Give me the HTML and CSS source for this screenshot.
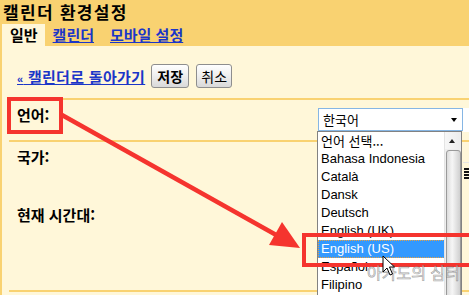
FILE: index.html
```
<!DOCTYPE html>
<html lang="ko">
<head>
<meta charset="utf-8">
<link rel="stylesheet" href="styles.css">
</head>
<body>
<div class="page">
  <div class="header">
    <div class="title">캘린더 환경설정</div>
    <div class="tabs">
      <span class="tab active">일반</span>
      <a class="tab link">캘린더</a>
      <a class="tab link">모바일 설정</a>
    </div>
  </div>
  <div class="content">
    <div class="toolbar">
      <a class="back"><span class="laquo">«</span> 캘린더로 돌아가기</a>
      <button class="btn primary">저장</button>
      <button class="btn secondary">취소</button>
    </div>
    <div class="row lang">
      <div class="label">언어:</div>
      <div class="select">
        <span class="value">한국어</span>
        <span class="caret"></span>
        <div class="listbox">
          <div class="opt ko">언어 선택...</div>
          <div class="opt">Bahasa Indonesia</div>
          <div class="opt">Català</div>
          <div class="opt">Dansk</div>
          <div class="opt">Deutsch</div>
          <div class="opt">English (UK)</div>
          <div class="opt selected">English (US)</div>
          <div class="opt">Español</div>
          <div class="opt">Filipino</div>
          <div class="scrollbar">
            <div class="sb-up"><span class="sb-arrow"></span></div>
            <div class="sb-thumb"></div>
          </div>
        </div>
      </div>
      <div class="edge-white"></div>
    </div>
    <div class="row rest">
      <div class="label">국가:</div>
      <div></div>
      <div class="edge-box"><span class="lines"></span><span class="lines"></span><span class="lines"></span><span class="lines"></span></div>
      <div class="label tz">현재 시간대:</div>
    </div>
  </div>

  <div class="mark mark1"></div>
  <div class="mark mark2"></div>
  <svg class="arrow" width="469" height="295" viewBox="0 0 469 295">
    <line x1="62" y1="115" x2="278" y2="236" stroke="#F5342E" stroke-width="4.5"/>
    <polygon points="300,248 269,245 282,222" fill="#F5342E"/>
  </svg>
  <div class="watermark">아카도의 심터</div>
  <svg class="cursor" width="14" height="22" viewBox="0 0 14 22">
    <path d="M1 1 L1 17 L5 13 L8 20 L10.5 19 L7.5 12 L12.5 12 Z" fill="#fff" stroke="#000" stroke-width="1"/>
  </svg>
</div>
</body>
</html>
```
FILE: styles.css
```
html, body {
  margin: 0;
  padding: 0;
}
body {
  background: #FFF7D9;
  font-family: "Noto Sans CJK KR", "Noto Sans", sans-serif;
  color: #000;
  overflow: hidden;
}
.page {
  position: relative;
  width: 469px;
  height: 295px;
  overflow: hidden;
}
.header {
  background: #F9D271;
}
.title {
  line-height: 24px;
  font-size: 17px;
  font-weight: bold;
  padding-left: 3px;
  letter-spacing: 1.3px;
  white-space: nowrap;
}
.tabs {
  display: flex;
  height: 22px;
  line-height: 22px;
  font-size: 15px;
  font-weight: bold;
}
.tab {
  padding: 0 8px;
  white-space: nowrap;
}
.tab.active {
  margin-left: 2px;
  background: #FFF7D9;
  padding: 0 7px 0 8px;
}
.tab.link {
  color: #1B36C8;
  text-decoration: underline;
}
.content {
  border-left: 2px solid #F9D271;
  padding-left: 7px;
  height: 249px;
}
.toolbar {
  display: flex;
  align-items: flex-end;
  padding: 18px 0 0 8px;
  height: 24px;
  margin-bottom: 10px;
}
.back {
  color: #1B36C8;
  text-decoration: underline;
  font-size: 15px;
  font-weight: bold;
  line-height: 18px;
  letter-spacing: 0.3px;
  margin-right: 6px;
  white-space: nowrap;
}
.laquo {
  font-family: "Liberation Sans", sans-serif;
  font-size: 11px;
}
.btn {
  height: 24px;
  padding: 0;
  border: 1px solid #8e8e8e;
  border-radius: 3px;
  background: linear-gradient(#ffffff, #f0f0f0 45%, #d9d9d9);
  font-family: "Noto Sans CJK KR", sans-serif;
  font-size: 14px;
  line-height: 20px;
  color: #000;
}
.btn.primary {
  width: 38px;
  font-weight: bold;
  margin-right: 7px;
}
.btn.secondary {
  width: 36px;
  font-weight: normal;
}
.row {
  border-top: 2px solid #F9D271;
  display: grid;
  grid-template-columns: 301px 145px 40px;
  padding-left: 8px;
}
.row.lang {
  height: 40px;
}
.row.rest {
  height: 148px;
  border-bottom: 2px solid #F9D271;
  grid-template-rows: 58px auto;
}
.label {
  font-size: 15px;
  font-weight: bold;
  line-height: 18px;
  padding-top: 6px;
  white-space: nowrap;
}
.select {
  position: relative;
  z-index: 5;
  margin-top: 8px;
  height: 23px;
  box-sizing: border-box;
  border: 1px solid #86B6E4;
  background: #fff;
  font-size: 13px;
  line-height: 21px;
  padding-left: 4px;
}
.caret {
  position: absolute;
  right: 5px;
  top: 9px;
  width: 0;
  height: 0;
  border-left: 3.5px solid transparent;
  border-right: 3.5px solid transparent;
  border-top: 4px solid #000;
}
.listbox {
  position: absolute;
  left: -2px;
  top: 22px;
  width: 145px;
  height: 175px;
  box-sizing: border-box;
  border: 1px solid #828282;
  background: #fff;
  font-family: "Liberation Sans", "Noto Sans CJK KR", sans-serif;
  font-size: 13px;
}
.opt {
  height: 18px;
  line-height: 18px;
  padding-left: 3px;
  width: 124px;
  white-space: nowrap;
}
.opt.ko {
  font-family: "Noto Sans CJK KR", sans-serif;
}
.opt.selected {
  background: #3399FF;
  color: #fff;
  outline: 1px dotted #E8A040;
  outline-offset: -1px;
}
.scrollbar {
  position: absolute;
  right: 0;
  top: 0;
  bottom: 0;
  width: 16px;
  background: #eeeeee;
  border-left: 1px solid #e4e4e4;
}
.sb-up {
  height: 17px;
  position: relative;
  background: linear-gradient(90deg, #f7f7f7, #ececec);
}
.sb-arrow {
  position: absolute;
  left: 4px;
  top: 7px;
  width: 0;
  height: 0;
  border-left: 3.5px solid transparent;
  border-right: 3.5px solid transparent;
  border-bottom: 4px solid #222;
}
.sb-thumb {
  margin: 1px 0 0 1px;
  width: 13px;
  height: 160px;
  border: 1px solid #9a9a9a;
  border-radius: 3px;
  background: linear-gradient(90deg, #dcdcdc, #f6f6f6 40%, #d0d0d0);
}
.edge-white {
  margin-top: 8px;
  height: 24px;
  background: #fff;
}
.edge-box {
  margin-top: 20px;
  border-top: 1px solid #e6e6e6;
  height: 24px;
  padding-top: 5px;
  box-sizing: border-box;
}
.lines {
  display: block;
  width: 12px;
  height: 2px;
  margin: 0 0 1px 1px;
  background: #111;
}
.label.tz {
  grid-column: 1;
  padding-top: 6px;
}
.mark {
  position: absolute;
  box-sizing: border-box;
  border: 4.5px solid #F5342E;
}
.mark1 {
  left: 7px;
  top: 97px;
  width: 56px;
  height: 37px;
}
.mark2 {
  left: 302px;
  top: 233px;
  width: 190px;
  height: 34px;
  z-index: 6;
}
.arrow {
  position: absolute;
  left: 0;
  top: 0;
  z-index: 7;
}
.watermark {
  position: absolute;
  left: 367px;
  top: 258px;
  z-index: 8;
  font-size: 16px;
  line-height: 28px;
  color: rgba(255, 255, 255, 0.45);
  -webkit-text-stroke: 0.7px rgba(110, 110, 110, 0.65);
  white-space: nowrap;
}
.cursor {
  position: absolute;
  left: 382px;
  top: 255px;
  z-index: 9;
}
```
